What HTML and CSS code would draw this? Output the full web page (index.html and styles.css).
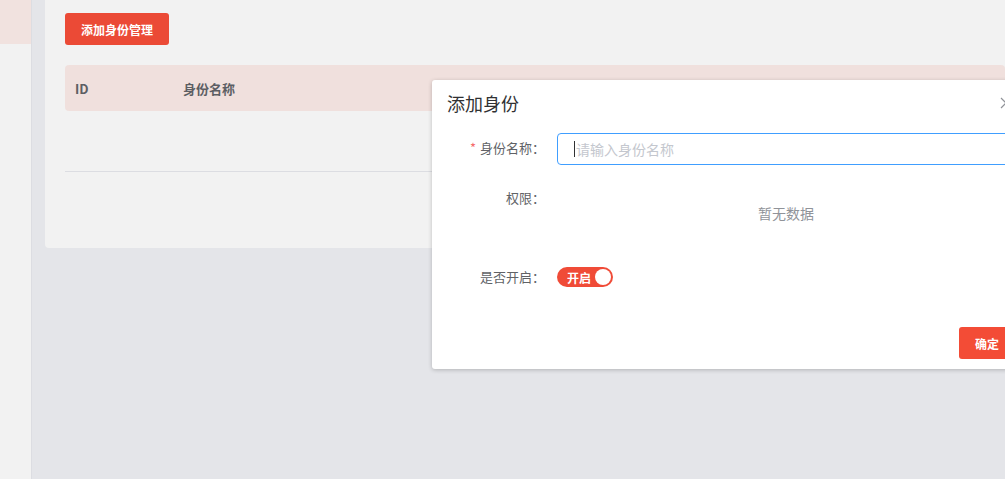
FILE: index.html
```html
<!DOCTYPE html>
<html lang="zh-CN">
<head>
    <meta charset="UTF-8">
    <meta name="viewport" content="width=device-width, initial-scale=1.0">
    <title>身份管理</title>
    <link rel="stylesheet" href="styles.css">
</head>
<body>
    <aside class="sidebar">
        <div class="side-item active"></div>
    </aside>
    <main class="main">
        <div class="card">
            <button class="btn btn-primary">添加身份管理</button>
            <div class="table">
                <div class="table-head">
                    <div class="col-id">ID</div>
                    <div class="col-name">身份名称</div>
                </div>
                <div class="table-empty"></div>
            </div>
        </div>
    </main>

    <div class="dialog">
        <div class="dialog-header">
            <span class="dialog-title">添加身份</span>
            <svg class="dialog-close" width="12" height="12" viewBox="0 0 12 12">
                <path d="M1 1L11 11M11 1L1 11" stroke="#909399" stroke-width="1.2" fill="none"/>
            </svg>
        </div>
        <div class="dialog-body">
            <div class="form-item item-name">
                <label class="form-label"><span class="required">*</span>身份名称：</label>
                <div class="form-content">
                    <div class="input">
                        <span class="caret"></span><span class="placeholder">请输入身份名称</span>
                    </div>
                </div>
            </div>
            <div class="form-item item-perm">
                <label class="form-label">权限：</label>
                <div class="form-content">
                    <div class="tree-empty">暂无数据</div>
                </div>
            </div>
            <div class="form-item item-switch">
                <label class="form-label">是否开启：</label>
                <div class="form-content">
                    <div class="switch">
                        <span class="switch-text">开启</span>
                        <span class="switch-knob"></span>
                    </div>
                </div>
            </div>
        </div>
        <div class="dialog-footer">
            <button class="btn btn-confirm">确定</button>
        </div>
    </div>
</body>
</html>
```

FILE: styles.css
```css
* {
    box-sizing: border-box;
}
body {
    margin: 0;
    height: 100vh;
    display: flex;
    overflow: hidden;
    font-family: "Noto Sans CJK SC", "Noto Sans", sans-serif;
    background: #e4e5e9;
    color: #606266;
}
.sidebar {
    width: 32px;
    flex-shrink: 0;
    background: #f2f2f2;
    border-right: 1px solid #dcdde2;
}
.side-item {
    height: 44px;
}
.side-item.active {
    background: #f1e2df;
}
.main {
    flex: 1;
    padding-left: 13px;
    overflow: hidden;
}
.card {
    height: 248px;
    margin-right: -20px;
    padding: 13px 20px 0;
    background: #f2f2f2;
    border-radius: 0 0 4px 4px;
}
.btn {
    border: none;
    height: 32px;
    padding: 0 16px;
    border-radius: 3px;
    font-family: inherit;
    font-size: 12px;
    font-weight: bold;
    color: #fff;
    cursor: pointer;
}
.btn-primary {
    background: #eb4a36;
}
.table {
    margin-top: 20px;
}
.table-head {
    display: flex;
    align-items: center;
    height: 46px;
    background: #f0e0dd;
    border-radius: 4px;
    font-size: 13px;
    font-weight: bold;
    color: #5c5e63;
}
.col-id {
    width: 118px;
    padding-left: 10px;
}
.table-empty {
    height: 61px;
    border-bottom: 1px solid #dcdde2;
}
.dialog {
    position: absolute;
    left: 432px;
    top: 80px;
    width: 600px;
    height: 289px;
    background: #fff;
    border-radius: 3px;
    box-shadow: 0 1px 4px rgba(0, 0, 0, 0.22);
}
.dialog-header {
    display: flex;
    justify-content: space-between;
    align-items: center;
    height: 24px;
    margin: 11px 20px 0 15px;
}
.dialog-title {
    font-size: 18px;
    color: #303133;
}
.dialog-body {
    padding: 18px 17px 0 18px;
}
.form-item {
    display: flex;
}
.item-name {
    margin-bottom: 18px;
}
.item-perm {
    margin-bottom: 18px;
}
.form-label {
    width: 107px;
    padding-right: 12px;
    text-align: right;
    font-size: 13px;
    line-height: 30px;
    color: #606266;
}
.item-switch .form-label {
    line-height: 32px;
}
.required {
    color: #f56c6c;
    margin-right: 4px;
}
.form-content {
    flex: 1;
}
.input {
    display: flex;
    align-items: center;
    height: 32px;
    padding-left: 16px;
    border: 1px solid #409eff;
    border-radius: 4px;
}
.caret {
    width: 1px;
    height: 16px;
    margin-right: 1px;
    background: #303133;
}
.placeholder {
    font-size: 14px;
    color: #c4c7ce;
}
.tree-empty {
    height: 60px;
    line-height: 60px;
    text-align: center;
    font-size: 14px;
    color: #909399;
}
.item-switch .form-content {
    display: flex;
    align-items: center;
}
.switch {
    display: flex;
    align-items: center;
    justify-content: space-between;
    width: 56px;
    height: 20px;
    padding: 0 2px 0 10px;
    border-radius: 10px;
    background: #f04b37;
}
.switch-text {
    font-size: 12px;
    font-weight: bold;
    color: #fff;
}
.switch-knob {
    width: 16px;
    height: 16px;
    border-radius: 50%;
    background: #fff;
}
.dialog-footer {
    display: flex;
    justify-content: flex-end;
    padding: 34px 17px 0;
}
.btn-confirm {
    background: #f34c36;
}
```
